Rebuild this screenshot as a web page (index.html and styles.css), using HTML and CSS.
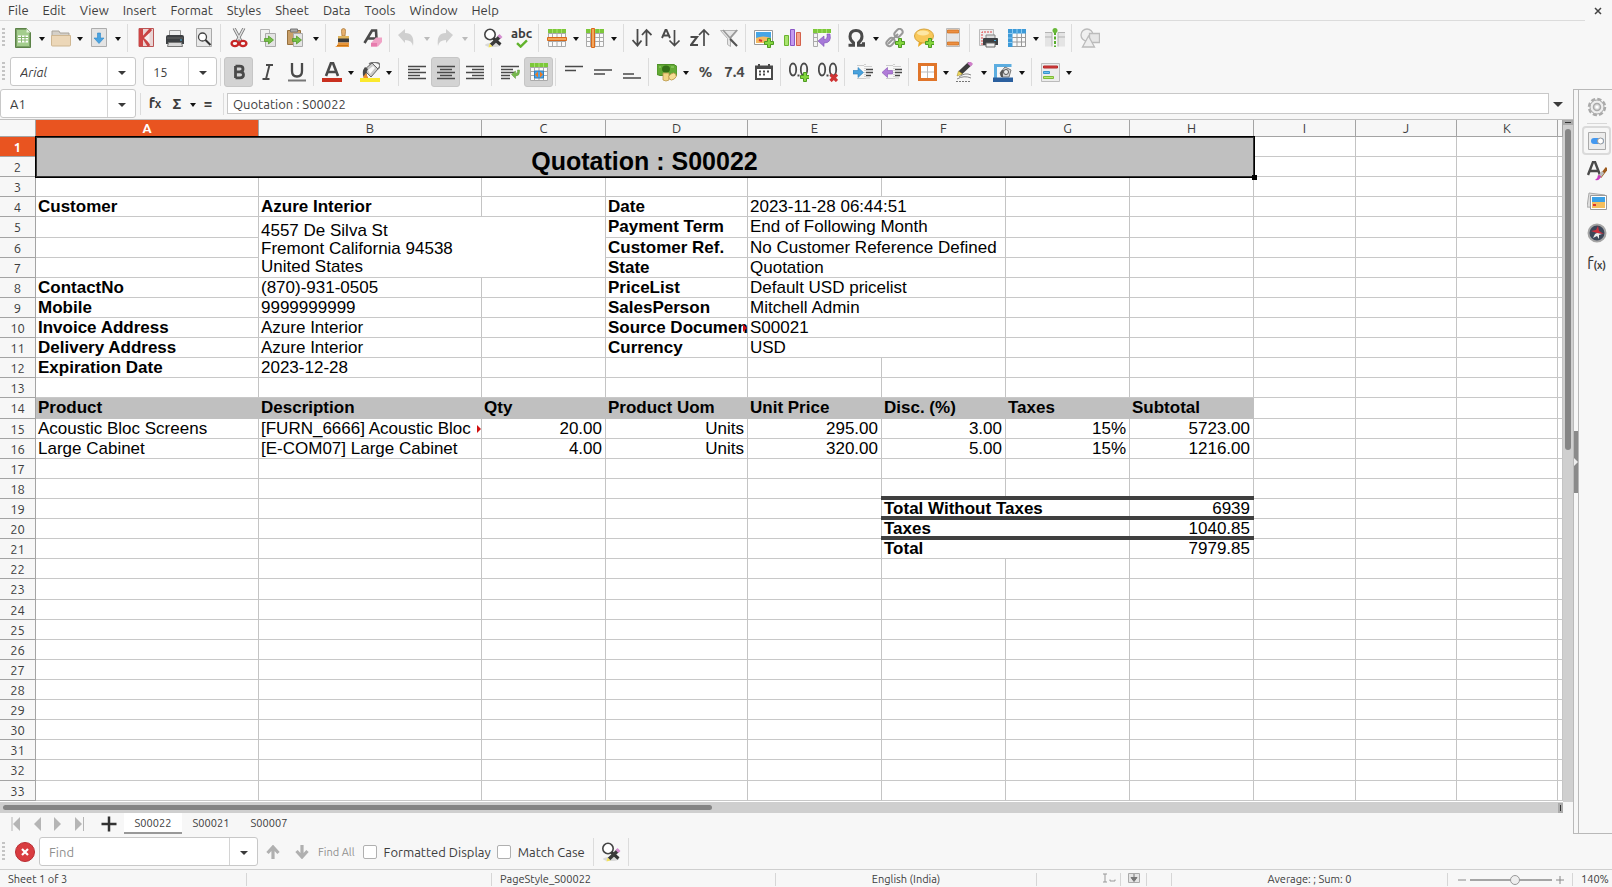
FILE: index.html
```html
<!DOCTYPE html>
<html lang="en">
<head>
    <meta charset="UTF-8">
    <title>Quotation : S00022</title>
    <link rel="stylesheet" href="styles.css">
</head>
<body>
<svg class="defs" aria-hidden="true">
    <symbol id="plus" viewBox="0 0 10 10"><path d="M3.5.5h3v3h3v3h-3v3h-3v-3h-3v-3h3z" fill="#84d63f" stroke="#4e9a22"/></symbol>
    <symbol id="find" viewBox="0 0 20 20">
        <ellipse cx="10" cy="17" rx="8" ry="2" fill="#000" opacity=".12"/>
        <circle cx="7" cy="6.500" r="5.200" fill="#fff" stroke="#444" stroke-width="1.600"/>
        <path d="M10.500 10.500l7 6" stroke="#333" stroke-width="3"/>
        <path d="M17 8.500L8 17" stroke="#3c3c3c" stroke-width="3.600"/>
        <path d="M16 9.500l2-2" stroke="#d58fd0" stroke-width="4"/>
        <path d="M5.500 19.500l1-4 3 3z" fill="#f3e35b"/>
    </symbol>
    <symbol id="sheet" viewBox="0 0 20 20">
        <path d="M1.500 1.500h17v17h-17z" fill="#fafafa" stroke="#aaa"/>
        <path d="M1 5.500h18M1 9.500h18M1 13.500h18M5.500 1v18M10 1v18M14.500 1v18" stroke="#aaa" fill="none"/>
        <path d="M1 1h18v4H1z" fill="#7cc83a"/><path d="M5.500 1v4M10 1v4M14.500 1v4" stroke="#a4e06c"/>
    </symbol>
</svg>

<header class="menubar">
    <nav class="menu">
        <a href="#">File</a><a href="#">Edit</a><a href="#">View</a><a href="#">Insert</a><a href="#">Format</a><a href="#">Styles</a><a href="#">Sheet</a><a href="#">Data</a><a href="#">Tools</a><a href="#">Window</a><a href="#">Help</a>
    </nav>
    <button class="close" aria-label="Close"><svg width="8" height="8" viewBox="0 0 8 8"><path d="M1 1l6 6M7 1L1 7" stroke="#444" stroke-width="1.500"/></svg></button>
</header>

<!-- standard toolbar -->
<div class="toolbar">
    <span class="grip"></span>
    <button class="tool" aria-label="New"><svg class="icon" viewBox="0 0 20 20"><path d="M2.500.5h11l4 4v15h-15z" fill="#7a9f66" stroke="#5b8247"/><path d="M4 2h9l3 3v13H4z" fill="#a3cd8c"/><path d="M13.500.5v4h4z" fill="#e3f3da"/><path d="M5 7.500h10v7H5z" fill="#fff"/><path d="M5 9.500h10M5 12h10M8.500 7.500v7M12 7.500v7" stroke="#86b56d"/></svg></button><button class="drop" aria-label="New options"></button>
    <button class="tool" aria-label="Open"><svg class="icon" viewBox="0 0 20 20"><path d="M1 17V3h7l1 2h9v12z" fill="#d5d0c8" stroke="#a9a39a"/><path d="M.5 7.500h19v9.500q0 1-1 1h-17q-1 0-1-1z" fill="#ecd7b8" stroke="#cfb792"/></svg></button><button class="drop" aria-label="Open options"></button>
    <button class="tool" aria-label="Save"><svg class="icon" viewBox="0 0 20 20"><path d="M2.500.5h15v18h-15z" fill="#e4e4e4" stroke="#adadad"/><path d="M8.500 5h3v5h3.500l-5 5.500L5 10h3.500z" fill="#4aa3e0" stroke="#2b86c8" stroke-width=".6"/></svg></button><button class="drop" aria-label="Save options"></button>
    <span class="sep"></span>
    <button class="tool" aria-label="Export as PDF"><svg class="icon" viewBox="0 0 20 20"><path d="M3 .5h14.500v18H3z" fill="#e9d5d5" stroke="#b55"/><path d="M3 1h4v17H3z" fill="#cf4545"/><path d="M15 1L7.500 9.500 13 18" stroke="#c94444" stroke-width="3" fill="none"/><path d="M13.500 5v10L8 10z" fill="#f6eded"/></svg></button>
    <button class="tool" aria-label="Print"><svg class="icon" viewBox="0 0 20 20"><path d="M4.500 2.500h11v6h-11z" fill="#eee" stroke="#999"/><path d="M1 9q0-2 2-2h14q2 0 2 2v7H1z" fill="#3d4043"/><path d="M2 10h16" stroke="#666"/><path d="M3.500 14.500h13l1 4h-15z" fill="#d8d8d8" stroke="#777"/><path d="M15 12h2" stroke="#49b3e8"/></svg></button>
    <button class="tool" aria-label="Print preview"><svg class="icon" viewBox="0 0 20 20"><path d="M2.500.5h15v18h-15z" fill="#e8e8e8" stroke="#aaa"/><circle cx="8.500" cy="9" r="4" fill="#fff" stroke="#444" stroke-width="1.300"/><path d="M11.500 12l5 5" stroke="#333" stroke-width="2"/></svg></button>
    <span class="sep"></span>
    <button class="tool" aria-label="Cut"><svg class="icon" viewBox="0 0 20 20"><path d="M5 0l7 13M15 0L8 13" stroke="#777" stroke-width="3"/><path d="M5 0l7 13M15 0L8 13" stroke="#e2e2e2" stroke-width="1.500"/><ellipse cx="6" cy="15.500" rx="3.400" ry="2.600" fill="none" stroke="#c62626" stroke-width="2.400"/><ellipse cx="14" cy="15.500" rx="3.400" ry="2.600" fill="none" stroke="#c62626" stroke-width="2.400"/></svg></button>
    <button class="tool" aria-label="Copy"><svg class="icon" viewBox="0 0 20 20"><path d="M2.500 1.500h9v12h-9z" fill="#f1f1f1" stroke="#b3b3b3"/><path d="M7.500 5.500h10v13h-10z" fill="#e4e4e4" stroke="#aaa"/><path d="M6.500 10.500h4V8l5 4-5 4v-2.500h-4z" fill="#76c147" stroke="#4a9420" stroke-width=".7"/></svg></button>
    <button class="tool" aria-label="Paste"><svg class="icon" viewBox="0 0 20 20"><path d="M.5 2.500h13v14H.5z" fill="#c99f68" stroke="#96713f"/><path d="M3.500 1h7v3h-7z" fill="#aaa" stroke="#777"/><path d="M6.500 5.500h9v13h-9z" fill="#e4e4e4" stroke="#aaa"/><path d="M5.500 10.500h4V8l5 4-5 4v-2.500h-4z" fill="#76c147" stroke="#4a9420" stroke-width=".7"/></svg></button><button class="drop" aria-label="Paste options"></button>
    <span class="sep"></span>
    <button class="tool" aria-label="Clone formatting"><svg class="icon" viewBox="0 0 20 20"><path d="M9.500.5q2.500 0 2 3l-.5 4.500H8l-.5-4.500q-.5-3 2-3z" fill="#e6b06f" stroke="#a87431" stroke-width=".7"/><path d="M4 8h11v3H4z" fill="#e0b45c"/><path d="M4 10.500h11v4H4z" fill="#3c3c3c"/><path d="M4 14.500h11v4.500H1q3-1 3-4.500z" fill="#e8963a"/><path d="M3 17.500h11" stroke="#cc7412"/></svg></button>
    <button class="tool" aria-label="Clear formatting"><svg class="icon" viewBox="0 0 20 20"><path d="M1.500 15L9 2.500h4L13.500 11M5 10.500h8" stroke="#4a4a4a" stroke-width="2.600" fill="none"/><path d="M8 15l5-5.500h6v4.500l-4 4.500H8z" fill="#f0a3c6"/><path d="M8 15h6v3.500H8z" fill="#e77bad"/></svg></button>
    <span class="sep"></span>
    <button class="tool" aria-label="Undo"><svg class="icon" viewBox="0 0 20 20"><path d="M0 7l7-6v4q10 0 8 13-1-6-8-6v3z" fill="#cfcfcf"/></svg></button><button class="drop off" aria-label="Undo list"></button>
    <button class="tool" aria-label="Redo"><svg class="icon" viewBox="0 0 20 20"><path d="M17 7l-7-6v4Q0 5 2 18q1-6 8-6v3z" fill="#cfcfcf"/></svg></button><button class="drop off" aria-label="Redo list"></button>
    <span class="sep"></span>
    <button class="tool" aria-label="Find and replace"><svg class="icon"><use href="#find"/></svg></button>
    <button class="tool abc" aria-label="Spelling"><span>abc</span><svg viewBox="0 0 14 10"><path d="M1.500 4.500l4 4 7-7" stroke="#61b32c" stroke-width="2.600" fill="none"/></svg></button>
    <span class="sep"></span>
    <button class="tool" aria-label="Row"><svg class="icon" viewBox="0 0 20 20"><use href="#sheet"/><path d="M.5 9.500h19v3H.5z" fill="#f3a65c" stroke="#d9691a"/></svg></button><button class="drop" aria-label="Row options"></button>
    <button class="tool" aria-label="Column"><svg class="icon" viewBox="0 0 20 20"><use href="#sheet"/><path d="M6.500.5h3v19h-3z" fill="#f3a65c" stroke="#d9691a"/></svg></button><button class="drop" aria-label="Column options"></button>
    <span class="sep"></span>
    <button class="tool" aria-label="Sort"><svg class="icon" viewBox="0 0 20 20"><path d="M5.500 1v16M.5 12l5 5.500 4-5M14.500 18V2M10 7l4.500-5L19.500 7" stroke="#4a4a4a" stroke-width="1.800" fill="none"/></svg></button>
    <button class="tool" aria-label="Sort ascending"><svg class="icon" viewBox="0 0 20 20"><path d="M1 10l3.500-8h1L9 10M2.500 7.500h5" stroke="#4a4a4a" stroke-width="1.900" fill="none"/><path d="M13.500 2v15M8.500 12.500l5 5 5-5" stroke="#4a4a4a" stroke-width="1.700" fill="none"/></svg></button>
    <button class="tool" aria-label="Sort descending"><svg class="icon" viewBox="0 0 20 20"><path d="M.5 9H7l-6 8h7" stroke="#4a4a4a" stroke-width="2.100" fill="none"/><path d="M14 18V2M9 7l5-5 5 5" stroke="#4a4a4a" stroke-width="1.700" fill="none"/></svg></button>
    <button class="tool" aria-label="AutoFilter"><svg class="icon" viewBox="0 0 20 20"><path d="M1.500 2.500h17l-7 8v8l-3-2v-6z" fill="#e6e6e6" stroke="#b3b3b3"/><path d="M4 2l14 16M18 2l-7 8" stroke="#999" stroke-width="1.500"/><path d="M11 11l7 7" stroke="#555" stroke-width="2"/></svg></button>
    <span class="sep"></span>
    <button class="tool" aria-label="Image"><svg class="icon" viewBox="0 0 20 20"><path d="M.5 2.500h18v14H.5z" fill="#fff" stroke="#999"/><path d="M2 4h15v6H2z" fill="#46a5e6"/><path d="M2 10q7-3 15 0v5H2z" fill="#f4ba62"/><path d="M5 12l3 1" stroke="#d33" stroke-width="2"/><use href="#plus" x="10" y="10" width="10" height="10"/></svg></button>
    <button class="tool" aria-label="Chart"><svg class="icon" viewBox="0 0 20 20"><path d="M1.500 7.500h4v10h-4z" fill="#a9e36f" stroke="#6cb530"/><path d="M7.500 1.500h4v16h-4z" fill="#c49af0" stroke="#8a57c7"/><path d="M13.500 4.500h4v13h-4z" fill="#f5a18e" stroke="#d4614b"/></svg></button>
    <button class="tool" aria-label="Pivot table"><svg class="icon" viewBox="0 0 20 20"><path d="M1.500 1.500h4v17h-4z" fill="#f4f4f4" stroke="#aaa"/><path d="M1 5.500h5M1 9.500h5M1 13.500h5" stroke="#aaa"/><path d="M1 1h18v4H1z" fill="#7cc83a"/><path d="M5.500 1v4M10 1v4M14.500 1v4" stroke="#a4e06c"/><path d="M18 6q2 9-6 9v3.500L6 13l6-5v3.500q4 0 3-5.500z" fill="#a679d8" stroke="#7b4cb5" stroke-width=".6"/></svg></button>
    <span class="sep"></span>
    <button class="tool" aria-label="Special character"><svg class="icon" viewBox="0 0 20 20"><path d="M1.500 17.200h5v-2.500Q3 12 3 8.500q0-6 6-6t6 6q0 3.500-3.500 6.200v2.500h5v-3" stroke="#4a4a4a" stroke-width="3" fill="none"/></svg></button><button class="drop" aria-label="Character list"></button>
    <button class="tool" aria-label="Hyperlink"><svg class="icon" viewBox="0 0 20 20"><path d="M3 16l5-5M8 11l5-5" stroke="#999" stroke-width="2"/><rect x="9" y="2" width="9" height="6" rx="3" transform="rotate(-45 13.500 5)" fill="none" stroke="#999" stroke-width="2"/><rect x="1" y="11" width="9" height="6" rx="3" transform="rotate(-45 5.500 14)" fill="none" stroke="#999" stroke-width="2"/><use href="#plus" x="10" y="10" width="10" height="10"/></svg></button>
    <button class="tool" aria-label="Comment"><svg class="icon" viewBox="0 0 20 20"><path d="M5 13l-1 6 5-4z" fill="#eaa71f"/><ellipse cx="10" cy="8" rx="9.500" ry="7" fill="#f9c85a" stroke="#d6a33a"/><ellipse cx="9" cy="5" rx="6" ry="2.500" fill="#fde7a4"/><use href="#plus" x="11" y="10" width="10" height="10"/></svg></button>
    <button class="tool" aria-label="Headers and footers"><svg class="icon" viewBox="0 0 20 20"><path d="M3.500.5h13v18h-13z" fill="#e6e6e6" stroke="#bbb"/><path d="M4.500 2h11v3h-11zM4.500 14h11v3h-11z" fill="#ec8f42" stroke="#cf6a14" stroke-width=".7"/></svg></button>
    <span class="sep"></span>
    <button class="tool" aria-label="Print area"><svg class="icon" viewBox="0 0 20 20"><path d="M1.500 1.500h14v16h-14z" fill="#eee" stroke="#bbb"/><path d="M4 17V4h11" stroke="#d44" stroke-dasharray="2 1" fill="none"/><path d="M8 7h9v4H8z" fill="#ddd" stroke="#888"/><path d="M5 11q0-1 1-1h13q1 0 1 1v6H5z" fill="#3d4043"/><path d="M8 15h9v4H8z" fill="#eee" stroke="#666"/><path d="M16 12.500h2" stroke="#4ad"/></svg></button>
    <button class="tool" aria-label="Freeze"><svg class="icon" viewBox="0 0 20 20"><path d="M1.500 1.500h17v17h-17z" fill="#fafafa" stroke="#999"/><path d="M1 9.500h18M1 14h18M10 1v18M14.500 1v18" stroke="#999"/><path d="M1 1h18v4.500H5.500V19H1z" fill="#3d9ad8"/><path d="M1 5.500h4.500M1 10h4.500M1 14.500h4.500M5.500 1v4.500M10 1v4.500M14.500 1v4.500" stroke="#8cc9f0"/></svg></button><button class="drop" aria-label="Freeze options"></button>
    <button class="tool" aria-label="Split window"><svg class="icon" viewBox="0 0 20 20"><path d="M0 4.500h7v14H0zM13 4.500h7v14h-7z" fill="#e4e4e4"/><path d="M0 4.500h7v14M20 4.500h-7v14M0 9h7M13 9h7" stroke="#b3b3b3" fill="none"/><path d="M10 4v15" stroke="#58ad2c" stroke-width="2" stroke-dasharray="3 1.500"/><circle cx="10" cy="2.500" r="2.500" fill="#69b83a"/></svg></button>
    <span class="sep"></span>
    <button class="tool" aria-label="Draw functions"><svg class="icon" viewBox="0 0 20 20"><circle cx="7" cy="7" r="6" fill="#f0f0f0" stroke="#bbb" stroke-width="1.300"/><path d="M9.500 5.500h10v9h-10z" fill="#e6e6e6" stroke="#bbb" stroke-width="1.300"/><path d="M8.500 8l6 11h-12z" fill="#eee" stroke="#bbb" stroke-width="1.300"/></svg></button>
</div>

<!-- formatting toolbar -->
<div class="toolbar format">
    <span class="grip"></span>
    <div class="combo font-name"><input type="text" value="Arial" aria-label="Font name"><button aria-label="Font list"></button></div>
    <div class="combo font-size"><input type="text" value="15" aria-label="Font size"><button aria-label="Size list"></button></div>
    <span class="sep"></span>
    <button class="tool on" aria-label="Bold"><svg class="icon" viewBox="0 0 20 20"><path d="M6.500 4v12M6.500 4.200h4q3.500 0 3.500 2.800t-3.500 2.800h-4h4.500q3.500 0 3.500 3t-3.500 3h-4.500" stroke="#4a4a4a" stroke-width="2.800" fill="none"/></svg></button>
    <button class="tool" aria-label="Italic"><svg class="icon" viewBox="0 0 20 20"><path d="M8 3h7M4.500 17h7M11.500 3L8 17" stroke="#4a4a4a" stroke-width="1.900" fill="none"/></svg></button>
    <button class="tool" aria-label="Underline"><svg class="icon" viewBox="0 0 20 20"><path d="M5 1v8q0 5.500 5 5.500T15 9V1" stroke="#4a4a4a" stroke-width="2.300" fill="none"/><path d="M1 18.500h18" stroke="#777" stroke-width="2"/></svg></button>
    <span class="sep"></span>
    <button class="tool" aria-label="Font color"><svg class="icon" viewBox="0 0 20 20"><path d="M4 14l5-13h2l5 13M5.500 10h9" stroke="#4a4a4a" stroke-width="2.600" fill="none"/><path d="M0 16h20v4H0z" fill="#c9301f"/></svg></button><button class="drop" aria-label="Font colors"></button>
    <button class="tool" aria-label="Highlighting color"><svg class="icon" viewBox="0 0 20 20"><path d="M9 2Q14-1 18 1t0 6" stroke="#777" fill="none" stroke-width="1.500"/><path d="M4 8l8-7 6 6-7 8z" fill="#c9c9c9" stroke="#666"/><path d="M8 8l5-4 2 2-5 6z" fill="#fafafa"/><path d="M5 5q-4 5-1 11h4Q5 11 8 7z" fill="#484848"/><path d="M3 15l3-4 2 5H4z" fill="#f0902c"/><path d="M0 16h20v4H0z" fill="#fbe92e"/></svg></button><button class="drop" aria-label="Highlighting colors"></button>
    <span class="sep"></span>
    <button class="tool" aria-label="Align left"><svg class="icon" viewBox="0 0 20 20"><path d="M1 4.500h18M1 7.500h12M1 10.500h18M1 13.500h12M1 16.500h18" stroke="#4a4a4a" stroke-width="1.500"/></svg></button>
    <button class="tool on" aria-label="Center horizontally"><svg class="icon" viewBox="0 0 20 20"><path d="M1 4.500h18M4 7.500h12M1 10.500h18M4 13.500h12M1 16.500h18" stroke="#4a4a4a" stroke-width="1.500"/></svg></button>
    <button class="tool" aria-label="Align right"><svg class="icon" viewBox="0 0 20 20"><path d="M1 4.500h18M7 7.500h12M1 10.500h18M7 13.500h12M1 16.500h18" stroke="#4a4a4a" stroke-width="1.500"/></svg></button>
    <span class="sep"></span>
    <button class="tool" aria-label="Wrap text"><svg class="icon" viewBox="0 0 20 20"><path d="M1 4.500h18M1 7.500h12M1 10.500h14M1 13.500h9M1 16.500h9" stroke="#4a4a4a" stroke-width="1.500"/><path d="M19.500 8v2q0 4-4 4v2.500l-4-4 4-3.500v2.500q2 0 2-2V8z" fill="#76b94e" stroke="#5c9c38" stroke-width=".5"/></svg></button>
    <button class="tool on" aria-label="Merge and center cells"><svg class="icon" viewBox="0 0 20 20"><use href="#sheet"/><path d="M5.500 9h9v7h-9z" fill="#4ba3e6" stroke="#2c7fc0"/><path d="M9 9.500v6l-3-3zM11 9.500v6l3-3z" fill="#ea7a22"/></svg></button>
    <span class="sep"></span>
    <button class="tool" aria-label="Align top"><svg class="icon" viewBox="0 0 20 20"><path d="M1 4.500h18M1 8.500h11" stroke="#4a4a4a" stroke-width="1.600"/></svg></button>
    <button class="tool" aria-label="Center vertically"><svg class="icon" viewBox="0 0 20 20"><path d="M1 8h18M1 12h11" stroke="#4a4a4a" stroke-width="1.600"/></svg></button>
    <button class="tool" aria-label="Align bottom"><svg class="icon" viewBox="0 0 20 20"><path d="M1 12h11M1 16h18" stroke="#4a4a4a" stroke-width="1.600"/></svg></button>
    <span class="sep"></span>
    <button class="tool" aria-label="Currency"><svg class="icon" viewBox="0 0 20 20"><path d="M0 2.500h17l3 2v9H3l-3-1z" fill="#63aa35" stroke="#4d8f28"/><ellipse cx="9" cy="7" rx="4" ry="3.500" fill="#346f17"/><path d="M14 5h3M2 5h2" stroke="#9bd670"/><path d="M6 11h6v7q-3 2-6 0z" fill="#f2d685" stroke="#b9964a" stroke-width=".8"/><ellipse cx="15.500" cy="14.500" rx="4" ry="3" transform="rotate(-35 15.500 14.500)" fill="#f6dd94" stroke="#b9964a" stroke-width=".8"/></svg></button><button class="drop" aria-label="Currency options"></button>
    <button class="tool glyph">%</button>
    <button class="tool glyph">7.4</button>
    <button class="tool" aria-label="Date"><svg class="icon" viewBox="0 0 20 20"><path d="M2 4.500h16V17H2z" fill="#fff" stroke="#4a4a4a" stroke-width="2"/><path d="M2 6h16M5 2v4M15 2v4" stroke="#4a4a4a" stroke-width="2"/><path d="M5 9.500h2M9 9.500h2M13 9.500h2M5 12.500h2M9 12.500h2" stroke="#4a4a4a" stroke-width="2"/></svg></button>
    <span class="sep"></span>
    <button class="tool" aria-label="Add decimal place"><svg class="icon" viewBox="0 0 20 20"><ellipse cx="4" cy="7.500" rx="3.200" ry="6" fill="none" stroke="#4a4a4a" stroke-width="1.800"/><ellipse cx="15" cy="7.500" rx="3.200" ry="6" fill="none" stroke="#4a4a4a" stroke-width="1.800"/><path d="M8.500 12.500h2v2h-2z" fill="#4a4a4a"/><use href="#plus" x="11" y="10" width="10" height="10"/></svg></button>
    <button class="tool" aria-label="Delete decimal place"><svg class="icon" viewBox="0 0 20 20"><ellipse cx="4" cy="7.500" rx="3.200" ry="6" fill="none" stroke="#4a4a4a" stroke-width="1.800"/><ellipse cx="15" cy="7.500" rx="3.200" ry="6" fill="none" stroke="#4a4a4a" stroke-width="1.800"/><path d="M8.500 12.500h2v2h-2z" fill="#4a4a4a"/><path d="M12.500 12.500l6.500 6.500M19 12.500L12.500 19" stroke="#cf3434" stroke-width="3.200"/></svg></button>
    <span class="sep"></span>
    <button class="tool" aria-label="Increase indent"><svg class="icon" viewBox="0 0 20 20"><path d="M4 3.500h7M4 16.500h7M13 4.500h6M13 16h4" stroke="#ccc"/><path d="M12 2v16" stroke="#aaa" stroke-dasharray="1 1"/><path d="M13 7.500h7M13 10.500h7M13 13.500h5" stroke="#4a4a4a" stroke-width="1.600"/><path d="M0 8.500h5V5.500l5.500 5-5.500 5v-3.500H0z" fill="#48a2dd" stroke="#2a7db8" stroke-width=".6"/></svg></button>
    <button class="tool" aria-label="Decrease indent"><svg class="icon" viewBox="0 0 20 20"><path d="M4 3.500h7M4 16.500h7M13 4.500h6M13 16h4" stroke="#ccc"/><path d="M12 2v16" stroke="#aaa" stroke-dasharray="1 1"/><path d="M13 7.500h7M13 10.500h7M13 13.500h5" stroke="#4a4a4a" stroke-width="1.600"/><path d="M10.500 8.500h-5V5.500l-5.500 5 5.500 5v-3.500h5z" fill="#b07bd8" stroke="#8450b4" stroke-width=".6"/></svg></button>
    <span class="sep"></span>
    <button class="tool" aria-label="Borders"><svg class="icon" viewBox="0 0 20 20"><path d="M2.500 2.500h16v15h-16z" fill="#fff" stroke="#e0752a" stroke-width="3"/><path d="M10.500 4v12M4 10h13" stroke="#bbb"/></svg></button><button class="drop" aria-label="Border list"></button>
    <button class="tool" aria-label="Border style"><svg class="icon" viewBox="0 0 20 20"><path d="M5 11L15 1.500" stroke="#3c3c3c" stroke-width="4.500"/><path d="M14 3l2.500-2.500" stroke="#cf7fc9" stroke-width="4.500"/><path d="M2 14l1.500-5 4 3z" fill="#f0d95b" stroke="#9a862a" stroke-width=".5"/><path d="M4 15q6-5 12-2M2 17q7-4 14-1" stroke="#888" fill="none"/><path d="M1 19.500h15" stroke="#777" stroke-dasharray="2 1"/></svg></button><button class="drop" aria-label="Border styles"></button>
    <button class="tool" aria-label="Border color"><svg class="icon" viewBox="0 0 20 20"><path d="M2.500 16V3.500h16" stroke="#5cade0" stroke-width="3" fill="none"/><path d="M7 11l5-6 6 3-2 7H9z" fill="#d6d6d6" stroke="#777"/><path d="M9 8q-3 3-1 7h2q-1-4 1-7z" fill="#555"/><circle cx="13" cy="10" r="2.500" fill="#eee" stroke="#555"/><path d="M0 15.500h20V20H0z" fill="#2b609f"/></svg></button><button class="drop" aria-label="Border colors"></button>
    <span class="sep"></span>
    <button class="tool" aria-label="Conditional formatting"><svg class="icon" viewBox="0 0 20 20"><path d="M1.500 1.500h18v18h-18z" fill="#ececec" stroke="#bbb"/><path d="M3.500 4h14v2h-14z" fill="#d63c3c" stroke="#b42a2a"/><path d="M3.500 9.500h6v2h-6z" fill="#6cc1f2" stroke="#3a94cb"/><path d="M3.500 14.500h10v2h-10z" fill="#b6ea74" stroke="#7fbb35"/></svg></button><button class="drop" aria-label="Conditions"></button>
</div>

<main class="work">
    <section class="document">
        <div class="formula">
            <div class="combo name-box"><input type="text" value="A1" aria-label="Name box"><button aria-label="Names"></button></div>
            <span class="sep"></span>
            <button class="fn" aria-label="Function wizard">f<small>x</small></button>
            <button class="fn" aria-label="Select function">Σ</button><button class="drop" aria-label="Functions"></button>
            <button class="fn" aria-label="Formula">=</button>
            <span class="sep"></span>
            <input class="line" type="text" value="Quotation : S00022" aria-label="Input line">
            <button class="expand" aria-label="Expand formula bar"></button>
        </div>

        <div class="view">
            <div class="grid">
                <table>
                    <colgroup><col class="rowhead"><col class="w223"><col class="w223"><col class="w124"><col class="w142"><col class="w134"><col class="w124"><col class="w124"><col class="w124"><col class="w102"><col class="w101"><col class="w101"><col></colgroup>
                    <thead>
                    <tr><th></th><th class="active">A</th><th>B</th><th>C</th><th>D</th><th>E</th><th>F</th><th>G</th><th>H</th><th>I</th><th>J</th><th>K</th><th></th></tr>
                    </thead>
                    <tbody>
                    <tr><th class="active">1</th><td class="title" colspan="8" rowspan="2">Quotation : S00022<span class="handle"></span></td><td></td><td></td><td></td><td></td></tr>
                    <tr><th>2</th><td></td><td></td><td></td><td></td></tr>
                    <tr><th>3</th><td></td><td></td><td></td><td></td><td></td><td></td><td></td><td></td><td></td><td></td><td></td><td></td></tr>
                    <tr><th>4</th><td class="b">Customer</td><td class="b">Azure Interior</td><td></td><td class="b">Date</td><td colspan="2">2023-11-28 06:44:51</td><td></td><td></td><td></td><td></td><td></td><td></td></tr>
                    <tr><th>5</th><td></td><td class="address" colspan="2" rowspan="3">4557 De Silva St<br>Fremont California 94538<br>United States</td><td class="b">Payment Term</td><td colspan="2">End of Following Month</td><td></td><td></td><td></td><td></td><td></td><td></td></tr>
                    <tr><th>6</th><td></td><td class="b">Customer Ref.</td><td colspan="2">No Customer Reference Defined</td><td></td><td></td><td></td><td></td><td></td><td></td></tr>
                    <tr><th>7</th><td></td><td class="b">State</td><td colspan="2">Quotation</td><td></td><td></td><td></td><td></td><td></td><td></td></tr>
                    <tr><th>8</th><td class="b">ContactNo</td><td>(870)-931-0505</td><td></td><td class="b">PriceList</td><td colspan="2">Default USD pricelist</td><td></td><td></td><td></td><td></td><td></td><td></td></tr>
                    <tr><th>9</th><td class="b">Mobile</td><td>9999999999</td><td></td><td class="b">SalesPerson</td><td colspan="2">Mitchell Admin</td><td></td><td></td><td></td><td></td><td></td><td></td></tr>
                    <tr><th>10</th><td class="b">Invoice Address</td><td>Azure Interior</td><td></td><td class="b cut">Source Documen</td><td colspan="2">S00021</td><td></td><td></td><td></td><td></td><td></td><td></td></tr>
                    <tr><th>11</th><td class="b">Delivery Address</td><td>Azure Interior</td><td></td><td class="b">Currency</td><td colspan="2">USD</td><td></td><td></td><td></td><td></td><td></td><td></td></tr>
                    <tr><th>12</th><td class="b">Expiration Date</td><td>2023-12-28</td><td></td><td></td><td></td><td></td><td></td><td></td><td></td><td></td><td></td><td></td></tr>
                    <tr><th>13</th><td></td><td></td><td></td><td></td><td></td><td></td><td></td><td></td><td></td><td></td><td></td><td></td></tr>
                    <tr><th>14</th><td class="head">Product</td><td class="head">Description</td><td class="head">Qty</td><td class="head">Product Uom</td><td class="head">Unit Price</td><td class="head">Disc. (%)</td><td class="head">Taxes</td><td class="head">Subtotal</td><td></td><td></td><td></td><td></td></tr>
                    <tr><th>15</th><td>Acoustic Bloc Screens</td><td class="cut">[FURN_6666] Acoustic Bloc</td><td class="n">20.00</td><td class="n">Units</td><td class="n">295.00</td><td class="n">3.00</td><td class="n">15%</td><td class="n">5723.00</td><td></td><td></td><td></td><td></td></tr>
                    <tr><th>16</th><td>Large Cabinet</td><td>[E-COM07] Large Cabinet</td><td class="n">4.00</td><td class="n">Units</td><td class="n">320.00</td><td class="n">5.00</td><td class="n">15%</td><td class="n">1216.00</td><td></td><td></td><td></td><td></td></tr>
                    <tr><th>17</th><td></td><td></td><td></td><td></td><td></td><td></td><td></td><td></td><td></td><td></td><td></td><td></td></tr>
                    <tr><th>18</th><td></td><td></td><td></td><td></td><td></td><td></td><td></td><td></td><td></td><td></td><td></td><td></td></tr>
                    <tr><th>19</th><td></td><td></td><td></td><td></td><td></td><td class="b sum" colspan="2">Total Without Taxes</td><td class="n sum">6939</td><td></td><td></td><td></td><td></td></tr>
                    <tr><th>20</th><td></td><td></td><td></td><td></td><td></td><td class="b sum" colspan="2">Taxes</td><td class="n sum">1040.85</td><td></td><td></td><td></td><td></td></tr>
                    <tr><th>21</th><td></td><td></td><td></td><td></td><td></td><td class="b sum" colspan="2">Total</td><td class="n sum">7979.85</td><td></td><td></td><td></td><td></td></tr>
                    <tr><th>22</th><td></td><td></td><td></td><td></td><td></td><td></td><td></td><td></td><td></td><td></td><td></td><td></td></tr>
                    <tr><th>23</th><td></td><td></td><td></td><td></td><td></td><td></td><td></td><td></td><td></td><td></td><td></td><td></td></tr>
                    <tr><th>24</th><td></td><td></td><td></td><td></td><td></td><td></td><td></td><td></td><td></td><td></td><td></td><td></td></tr>
                    <tr><th>25</th><td></td><td></td><td></td><td></td><td></td><td></td><td></td><td></td><td></td><td></td><td></td><td></td></tr>
                    <tr><th>26</th><td></td><td></td><td></td><td></td><td></td><td></td><td></td><td></td><td></td><td></td><td></td><td></td></tr>
                    <tr><th>27</th><td></td><td></td><td></td><td></td><td></td><td></td><td></td><td></td><td></td><td></td><td></td><td></td></tr>
                    <tr><th>28</th><td></td><td></td><td></td><td></td><td></td><td></td><td></td><td></td><td></td><td></td><td></td><td></td></tr>
                    <tr><th>29</th><td></td><td></td><td></td><td></td><td></td><td></td><td></td><td></td><td></td><td></td><td></td><td></td></tr>
                    <tr><th>30</th><td></td><td></td><td></td><td></td><td></td><td></td><td></td><td></td><td></td><td></td><td></td><td></td></tr>
                    <tr><th>31</th><td></td><td></td><td></td><td></td><td></td><td></td><td></td><td></td><td></td><td></td><td></td><td></td></tr>
                    <tr><th>32</th><td></td><td></td><td></td><td></td><td></td><td></td><td></td><td></td><td></td><td></td><td></td><td></td></tr>
                    <tr><th>33</th><td></td><td></td><td></td><td></td><td></td><td></td><td></td><td></td><td></td><td></td><td></td><td></td></tr>
                    </tbody>
                </table>
            </div>
            <div class="vscroll"><span class="split"></span><span class="thumb"></span></div>
        </div>
        <div class="hscroll"><span class="thumb"></span><span class="split"></span></div>

        <div class="tabs">
            <button class="nav" aria-label="First sheet"><svg width="10" height="14" viewBox="0 0 10 14"><path d="M9 0v14L2 7z" fill="#b5b5b5"/><path d="M1 0v14" stroke="#b5b5b5"/></svg></button>
            <button class="nav" aria-label="Previous sheet"><svg width="10" height="14" viewBox="0 0 10 14"><path d="M9 0v14L2 7z" fill="#b5b5b5"/></svg></button>
            <button class="nav" aria-label="Next sheet"><svg width="10" height="14" viewBox="0 0 10 14"><path d="M1 0v14l7-7z" fill="#b5b5b5"/></svg></button>
            <button class="nav" aria-label="Last sheet"><svg width="10" height="14" viewBox="0 0 10 14"><path d="M1 0v14l7-7z" fill="#b5b5b5"/><path d="M9.500 0v14" stroke="#b5b5b5"/></svg></button>
            <button class="add" aria-label="Add sheet"><svg width="16" height="16" viewBox="0 0 16 16"><path d="M8 .5v15M.5 8h15" stroke="#333" stroke-width="2.500"/></svg></button>
            <button class="tab current">S00022</button><button class="tab">S00021</button><button class="tab">S00007</button>
        </div>
    </section>

    <div class="splitter"><span><svg width="4" height="8" viewBox="0 0 4 8"><path d="M0 0l4 4-4 4z" fill="#eee"/></svg></span></div>
    <aside class="sidebar">
        <button aria-label="Sidebar settings"><svg class="icon" viewBox="0 0 20 20"><circle cx="10" cy="10" r="7.500" fill="#eee" stroke="#aaa" stroke-width="3.500" stroke-dasharray="3.900 2"/><circle cx="10" cy="10" r="7" fill="#eee" stroke="#aaa"/><circle cx="10" cy="10" r="3.500" fill="#ddd" stroke="#aaa" stroke-width="1.500"/><circle cx="10" cy="10" r="1.600" fill="#fff"/></svg></button>
        <hr>
        <button class="current" aria-label="Properties"><svg class="icon" viewBox="0 0 20 20"><path d="M1.500 1.500h17v17h-17z" fill="#ececec" stroke="#aaa"/><rect x="4" y="7" width="13" height="6" rx="3" fill="#4398f0"/><circle cx="13.500" cy="10" r="3" fill="#fff" stroke="#999"/></svg></button>
        <button aria-label="Styles"><svg class="icon" viewBox="0 0 20 20"><path d="M1 14L6 1h2l5 13M3 10h8" stroke="#4a4a4a" stroke-width="2.400" fill="none"/><path d="M20 7l-7 9" stroke="#9c5a1c" stroke-width="3"/><path d="M16 11l-3 4" stroke="#bbb" stroke-width="3"/><path d="M14 15q-1 5-6 4 3-2 3-5z" fill="#c93bc0"/></svg></button>
        <button aria-label="Gallery"><svg class="icon" viewBox="0 0 20 20"><path d="M2 1l16 2-2 13-16-1z" fill="#ddd" stroke="#aaa"/><path d="M3.500 3.500h16v14h-16z" fill="#fff" stroke="#999"/><path d="M5 5h13v5H5z" fill="#3aa0e6"/><path d="M5 10h13v6H5z" fill="#f5bf5e"/><path d="M6 13h3" stroke="#d33" stroke-width="2"/></svg></button>
        <button aria-label="Navigator"><svg class="icon" viewBox="0 0 20 20"><circle cx="10" cy="10" r="8.500" fill="#3d4759" stroke="#a5a5a5" stroke-width="2"/><path d="M10 10L4 8l5-1 2-4 1 5 5 3z" fill="#cf2f3c"/><path d="M10 10l5 1-3 1 0 4-2-3-4 2 2-4z" fill="#eee"/></svg></button>
        <button class="fx" aria-label="Functions">f<small>(x)</small></button>
    </aside>
</main>

<div class="findbar">
    <span class="grip"></span>
    <button class="stop" aria-label="Close find bar"><svg width="20" height="20" viewBox="0 0 20 20"><circle cx="10" cy="10" r="9.500" fill="#d93c40" stroke="#b92d33"/><path d="M7 7l6 6M13 7l-6 6" stroke="#fff" stroke-width="2.200"/></svg></button>
    <div class="combo find"><input type="text" placeholder="Find" aria-label="Find"><button aria-label="Search history"></button></div>
    <button class="tool" aria-label="Find previous"><svg width="14" height="14" viewBox="0 0 14 14"><path d="M7 14V3M1.500 8L7 2l5.500 6" stroke="#b0b0b0" stroke-width="3.200" fill="none"/></svg></button>
    <button class="tool" aria-label="Find next"><svg width="14" height="14" viewBox="0 0 14 14"><path d="M7 0v11M1.500 6L7 12l5.500-6" stroke="#b0b0b0" stroke-width="3.200" fill="none"/></svg></button>
    <button class="all">Find All</button>
    <label><input type="checkbox">Formatted Display</label>
    <label><input type="checkbox">Match Case</label>
    <span class="sep"></span>
    <button class="tool" aria-label="Find and replace"><svg class="icon"><use href="#find"/></svg></button>
    <span class="sep"></span>
</div>

<footer class="status">
    <span>Sheet 1 of 3</span>
    <span></span>
    <span>PageStyle_S00022</span>
    <span class="mid">English (India)</span>
    <span class="end"><svg width="14" height="10" viewBox="0 0 14 10"><path d="M1 1h4M3 1v8M1 9h4M8 6.500v1.500h5V6.500" stroke="#999" fill="none"/></svg></span>
    <span class="mid"><svg width="12" height="10" viewBox="0 0 12 10"><path d="M.5.5h11v9H.5z" fill="#e5e5e5" stroke="#aaa"/><path d="M6 1v4M3 4.500h6L6 8.500z" fill="#777" stroke="#777"/></svg></span>
    <span></span>
    <span class="mid">Average: ; Sum: 0</span>
    <span class="zoom"><button aria-label="Zoom out"><svg width="8" height="8" viewBox="0 0 8 8"><path d="M0 4h8" stroke="#888"/></svg></button><input type="range" min="0" max="100" value="56" aria-label="Zoom"><button aria-label="Zoom in"><svg width="8" height="8" viewBox="0 0 8 8"><path d="M0 4h8M4 0v8" stroke="#888"/></svg></button></span>
    <span class="percent">140%</span>
</footer>
</body>
</html>
```
FILE: styles.css
```css
*{
    box-sizing: border-box;
    margin: 0;
    padding: 0;
}
body{
    display: flex;
    flex-direction: column;
    height: 100vh;
    overflow: hidden;
    background: #f7f7f7;
    color: #3d3d3d;
    font: 13px/16px Ubuntu, "Open Sans", "Noto Sans", sans-serif;
}
button, input{
    font: inherit;
    color: inherit;
    border: 0;
    background: none;
    outline: 0;
}
a{
    color: inherit;
    text-decoration: none;
}
.defs{
    position: absolute;
    width: 0;
    height: 0;
}

/* menu */
.menubar{
    display: flex;
    flex: none;
    height: 21px;
}
.menu{
    display: flex;
    flex: 1;
    gap: 14px;
    padding: 2px 0 0 8px;
    border-bottom: 1px solid #dcdcdc;
}
.close{
    width: 26px;
    height: 19px;
    margin-right: 1px;
}

/* toolbars */
.toolbar{
    display: flex;
    flex: none;
    align-items: center;
    height: 33px;
}
.format{
    height: 35px;
}
.grip{
    flex: none;
    width: 3px;
    height: 20px;
    margin: 0 3px 0 2px;
    background: repeating-linear-gradient(#c4c4c4 0 2px, #f7f7f7 2px 4px);
}
.tool{
    display: flex;
    flex: none;
    align-items: center;
    justify-content: center;
    width: 29px;
    height: 30px;
    border-radius: 3px;
}
.tool.on{
    background: #d3d3d3;
    border: 1px solid #c6c6c6;
}
.icon{
    flex: none;
    width: 20px;
    height: 20px;
}
.drop{
    flex: none;
    width: 9px;
    height: 30px;
}
.drop::before, .combo button::before, .expand::before{
    content: "";
    display: block;
    width: 0;
    margin: 2px auto 0;
    border: 3px solid transparent;
    border-top: 4px solid #111;
    border-bottom: 0;
}
.drop.off::before{
    border-top-color: #bbb;
}
.sep{
    flex: none;
    width: 1px;
    height: 28px;
    margin: 0 3px 0 2px;
    background: #dcdcdc;
}
.drop + .sep{
    margin-left: 5px;
}
.abc{
    flex-direction: column;
    font-weight: bold;
    line-height: 12px;
}
.abc svg{
    width: 14px;
    height: 9px;
}
.glyph{
    font-size: 15px;
    font-weight: bold;
    color: #4a4a4a;
}
.drop + .glyph{
    margin-left: 1px;
}
.combo{
    display: flex;
    flex: none;
    height: 29px;
    background: #fff;
    border: 1px solid #c8c8c8;
    border-radius: 3px;
}
.combo input{
    flex: 1;
    min-width: 0;
    padding-left: 9px;
}
.combo button{
    width: 28px;
    border-left: 1px solid #d4d4d4;
}
.combo button::before, .expand::before{
    border-width: 4px 4px 0;
    border-top-color: #3a3a3a;
}
.font-name{
    width: 126px;
    margin-left: 2px;
}
.font-name input{
    font-style: italic;
}
.font-size{
    width: 74px;
    margin: 0 1px 0 7px;
}

/* document */
.work{
    display: flex;
    flex: 1;
    min-height: 0;
}
.document{
    display: flex;
    flex: 1;
    flex-direction: column;
    min-width: 0;
}
.formula{
    display: flex;
    flex: none;
    align-items: center;
    height: 30px;
    padding-bottom: 1px;
}
.name-box{
    width: 136px;
}
.formula .sep{
    height: 22px;
    margin: 0 3px 0 4px;
}
.fn{
    width: 22px;
    height: 24px;
    font-size: 15px;
    font-weight: bold;
}
.fn small{
    font-size: 12px;
}
.line{
    flex: 1;
    height: 21px;
    padding-left: 5px;
    background: #fff;
    border: 1px solid #c8c8c8;
}
.expand{
    width: 18px;
    height: 24px;
    margin-right: 6px;
}
.expand::before{
    border-width: 5px 5px 0;
}
.view{
    display: flex;
    flex: 1;
    min-height: 0;
    border-top: 1px solid #c0c0c0;
}
.grid{
    display: grid;
    flex: 1;
    overflow: hidden;
    padding-bottom: 1px;
    background: #fff;
}
table{
    width: 100%;
    height: 100%;
    table-layout: fixed;
    border-collapse: separate;
    border-spacing: 0;
    font: 17px/17px "Liberation Sans", Arial, sans-serif;
    color: #000;
}
.rowhead{ width: 36px; }
.w101{ width: 101px; }
.w102{ width: 102px; }
.w124{ width: 124px; }
.w134{ width: 134px; }
.w142{ width: 142px; }
.w223{ width: 223px; }
th{
    border-right: 1px solid #a4a4a4;
    border-bottom: 1px solid #a4a4a4;
    background: #f7f7f7;
    color: #3d3d3d;
    font: 13px/16px Ubuntu, "Open Sans", "Noto Sans", sans-serif;
}
thead th{
    height: 17px;
}
th.active{
    background: #e95420;
    color: #fff;
    font-weight: bold;
}
tbody th{
    padding-top: 2px;
    line-height: 15px;
}
td{
    height: 20px;
    padding: 1px 3px 0 2px;
    border-right: 1px solid #c4c4c4;
    border-bottom: 1px solid #c8c8c8;
    vertical-align: top;
    white-space: nowrap;
}
.b{
    font-weight: bold;
}
.n{
    text-align: right;
}
.title{
    position: relative;
    padding-top: 9px;
    background: #c0c0c0;
    border: 1px solid #333;
    outline: 1px solid #000;
    text-align: center;
    vertical-align: middle;
    font-size: 25px;
    font-weight: bold;
}
.handle{
    position: absolute;
    right: -4px;
    bottom: -4px;
    width: 5px;
    height: 5px;
    background: #000;
}
.address{
    padding-top: 3px;
    line-height: 18px;
    vertical-align: middle;
}
.head{
    background: #c0c0c0;
    border-color: #c0c0c0;
    font-weight: bold;
}
/* red arrow where a text is longer than its cell */
.cut{
    position: relative;
}
.cut::after{
    content: "";
    position: absolute;
    right: 0;
    top: 6px;
    border: 4px solid transparent;
    border-left-color: #d01010;
    border-right: 0;
}
/* heavy line above each total */
.sum{
    position: relative;
}
.sum::before{
    content: "";
    position: absolute;
    top: -3px;
    left: -1px;
    right: -1px;
    height: 4px;
    background: #3f3f3f;
}

/* scrollbars */
.vscroll{
    display: flex;
    flex-direction: column;
    align-items: center;
    width: 10px;
    background: #cfcfcf;
}
.vscroll .split{
    width: 10px;
    height: 5px;
    background: linear-gradient(#333, #333) center / 6px 1px no-repeat #ababab;
}
.vscroll .thumb{
    width: 6px;
    height: 47%;
    margin-top: 4px;
    border-radius: 3px;
    background: #858585;
}
.hscroll{
    display: flex;
    flex: none;
    align-items: center;
    justify-content: space-between;
    height: 11px;
    margin-right: 10px;
    padding-left: 3px;
    background: #cfcfcf;
}
.hscroll .thumb{
    width: 709px;
    height: 5px;
    border-radius: 3px;
    background: #858585;
}
.hscroll .split{
    width: 5px;
    height: 10px;
    background: linear-gradient(#333, #333) center / 1px 6px no-repeat #ababab;
}

/* sheet tabs */
.tabs{
    display: flex;
    flex: none;
    align-items: center;
    height: 21px;
    padding-left: 11px;
}
.tabs button{
    height: 21px;
}
.nav{
    display: flex;
    align-items: center;
    width: 21px;
}
.add{
    width: 29px;
    display: flex;
    align-items: center;
    padding-left: 6px;
}
.tab{
    width: 58px;
    padding-top: 1px;
    border-bottom: 2px solid transparent;
    font-size: 11px;
}
.tab.current{
    background: #fff;
    border-bottom-color: #999;
}

/* sidebar */
.splitter{
    display: flex;
    align-items: center;
    width: 6px;
    border: 1px solid #b9b9b9;
}
.splitter span{
    display: flex;
    align-items: center;
    width: 4px;
    height: 62px;
    background: #8a8a8a;
}
.sidebar{
    display: flex;
    flex-direction: column;
    align-items: center;
    width: 33px;
    padding: 1px 0 0 2px;
    border-top: 1px solid #b9b9b9;
    border-bottom: 1px solid #b9b9b9;
}
.sidebar button{
    display: flex;
    flex: none;
    align-items: center;
    justify-content: center;
    width: 29px;
    height: 31px;
}
.sidebar hr{
    width: 20px;
    margin: 1px 0 2px;
    border: 0;
    border-top: 1px solid #d8d8d8;
}
.sidebar .current{
    height: 29px;
    border: 2px solid #dadada;
    border-radius: 4px;
}
.sidebar .fx{
    align-items: baseline;
    padding-top: 7px;
    font-size: 17px;
}
.fx small{
    font-size: 10px;
    font-weight: bold;
}

/* find */
.findbar{
    display: flex;
    flex: none;
    align-items: center;
    height: 36px;
    border-bottom: 1px solid #cfcfcf;
}
.stop{
    display: flex;
    margin: 0 4px 0 7px;
}
.find{
    width: 219px;
}
.find input::placeholder{
    color: #8f8f8f;
    opacity: 1;
}
.all{
    margin: 0 8px 0 2px;
    padding-top: 1px;
    color: #8f8f8f;
    font-size: 11px;
}
.findbar label{
    display: flex;
    align-items: center;
    gap: 7px;
    margin-right: 6px;
}
.findbar label input{
    appearance: none;
    width: 14px;
    height: 14px;
    background: #fff;
    border: 1px solid #b0b0b0;
    border-radius: 2px;
}

/* status */
.status{
    display: grid;
    grid-template-columns: 247fr 245fr 284fr 261fr 84px 26px 25px 276fr 125px 39px;
    flex: none;
    align-items: center;
    height: 17px;
    padding-top: 2px;
    font-size: 11px;
    line-height: 13px;
}
.status > span{
    height: 13px;
    padding-left: 8px;
    border-right: 1px solid #d6d6d6;
}
.status > .mid{
    padding: 0;
    text-align: center;
}
.status > .end{
    padding-right: 4px;
    text-align: right;
}
.status > .zoom{
    display: flex;
    align-items: center;
    gap: 4px;
    padding: 0 8px 0 10px;
}
.zoom button{
    display: flex;
}
.zoom input{
    flex: 1;
    min-width: 0;
    appearance: none;
    height: 2px;
    background: #a5a5a5;
}
.zoom input::-webkit-slider-thumb{
    appearance: none;
    width: 10px;
    height: 10px;
    border: 1px solid #999;
    border-radius: 50%;
    background: #eee;
}
.status > .percent{
    border: 0;
}
```
